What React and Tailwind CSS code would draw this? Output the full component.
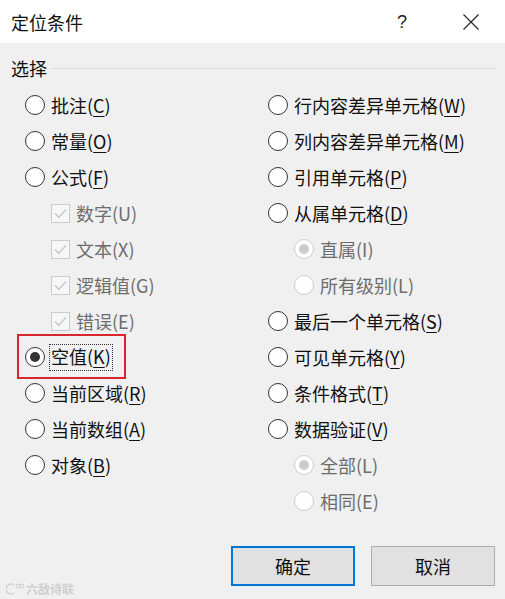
import React from "react";

const FONT = { fontFamily: '"Noto Sans CJK SC", "Noto Sans", sans-serif' };

function Radio({ checked, disabled }) {
  return (
    <span
      className={`w-[20px] h-[20px] rounded-full border flex items-center justify-center shrink-0 ${
        disabled ? "border-[#cccccc] bg-white" : "border-[#333333] bg-white"
      }`}
    >
      {checked && (
        <span
          className={`w-[10px] h-[10px] rounded-full ${disabled ? "bg-[#cccccc]" : "bg-[#333333]"}`}
        />
      )}
    </span>
  );
}

function Check() {
  return (
    <span className="w-[19px] h-[19px] border border-[#cccccc] bg-[#f7f7f7] flex items-center justify-center shrink-0">
      <svg width="13" height="11" viewBox="0 0 13 11">
        <path d="M1 5.5 L4.8 9.2 L12 1.5" fill="none" stroke="#c6c6c6" strokeWidth="1.3" />
      </svg>
    </span>
  );
}

function Label({ text, k, after = ")", disabled, underline = true }) {
  return (
    <span className={`text-[18px] leading-[22px] whitespace-nowrap ${disabled ? "text-[#6d6d6d]" : "text-[#111111]"}`}>
      {text}(
      {underline ? <span className="underline underline-offset-[3px] decoration-1">{k}</span> : k}
      {after}
    </span>
  );
}

function RadioRow({ text, k, checked, disabled, indent, highlight }) {
  return (
    <div className={`h-[36px] flex items-center ${indent ? "pl-[26px]" : ""}`}>
      <div className="relative flex items-center gap-[6px]">
        <Radio checked={checked} disabled={disabled} />
        {highlight ? (
          <span className="relative">
            <Label text={text} k={k} disabled={disabled} underline={!disabled} />
            <span className="absolute -left-[2px] -right-[2px] -top-[1px] -bottom-[2px] border border-dotted border-[#333]" />
          </span>
        ) : (
          <Label text={text} k={k} disabled={disabled} underline={!disabled} />
        )}
        {highlight && (
          <span className="absolute -left-[8px] -right-[15px] -top-[11px] -bottom-[10px] border-2 border-[#d9262c]" />
        )}
      </div>
    </div>
  );
}

function CheckRow({ text, k }) {
  return (
    <div className="h-[36px] flex items-center pl-[26px] gap-[6px]">
      <Check />
      <Label text={text} k={k} disabled underline={false} />
    </div>
  );
}

export default function App() {
  return (
    <div className="w-[505px] h-[599px] bg-[#f0f0f0] flex flex-col relative overflow-hidden" style={FONT}>
      <div className="h-[43px] bg-white flex items-center pl-[11px] pr-[26px] shrink-0">
        <span className="text-[18px] text-[#111] leading-none">定位条件</span>
        <span className="ml-auto text-[18px] text-[#222] leading-none mr-[56px]" style={{ fontFamily: '"Liberation Sans", sans-serif' }}>?</span>
        <svg width="16" height="16" viewBox="0 0 16 16">
          <path d="M0.5 0.5 L15.5 15.5 M15.5 0.5 L0.5 15.5" stroke="#222" strokeWidth="1.1" />
        </svg>
      </div>

      <div className="flex items-center pl-[11px] pr-[9px] mt-[14px] h-[22px]">
        <span className="text-[18px] leading-[22px] text-[#111]">选择</span>
        <span className="flex-1 h-px bg-[#dcdcdc] ml-[4px]" />
      </div>

      <div className="flex mt-[8px]">
        <div className="w-[243px] pl-[25px] flex flex-col">
          <RadioRow text="批注" k="C" />
          <RadioRow text="常量" k="O" />
          <RadioRow text="公式" k="F" />
          <CheckRow text="数字" k="U" />
          <CheckRow text="文本" k="X" />
          <CheckRow text="逻辑值" k="G" />
          <CheckRow text="错误" k="E" />
          <RadioRow text="空值" k="K" checked highlight />
          <RadioRow text="当前区域" k="R" />
          <RadioRow text="当前数组" k="A" />
          <RadioRow text="对象" k="B" />
        </div>
        <div className="flex-1 pl-[25px] flex flex-col">
          <RadioRow text="行内容差异单元格" k="W" />
          <RadioRow text="列内容差异单元格" k="M" />
          <RadioRow text="引用单元格" k="P" />
          <RadioRow text="从属单元格" k="D" />
          <RadioRow text="直属" k="I" checked disabled indent />
          <RadioRow text="所有级别" k="L" disabled indent />
          <RadioRow text="最后一个单元格" k="S" />
          <RadioRow text="可见单元格" k="Y" />
          <RadioRow text="条件格式" k="T" />
          <RadioRow text="数据验证" k="V" />
          <RadioRow text="全部" k="L" checked disabled indent />
          <RadioRow text="相同" k="E" disabled indent />
        </div>
      </div>

      <div className="flex justify-end gap-[16px] pr-[10px] mt-[27px]">
        <button className="w-[124px] h-[40px] border-2 border-[#0078d7] bg-[#e1e1e1] text-[18px] text-[#111] flex items-center justify-center">
          确定
        </button>
        <button className="w-[124px] h-[40px] border border-[#adadad] bg-[#e1e1e1] text-[18px] text-[#111] flex items-center justify-center">
          取消
        </button>
      </div>

      <div className="absolute left-[6px] bottom-[4px] flex items-center gap-[2px] text-[#cfcfcf]">
        <svg width="18" height="12" viewBox="0 0 18 12">
          <path d="M8 2 A5 5 0 1 0 8 10" fill="none" stroke="#cfcfcf" strokeWidth="1.5" />
          <circle cx="12" cy="3" r="2" fill="none" stroke="#cfcfcf" strokeWidth="1" />
          <circle cx="16" cy="3" r="2" fill="none" stroke="#cfcfcf" strokeWidth="1" />
        </svg>
        <span className="text-[12px] leading-none font-bold">六敌诗联</span>
      </div>
    </div>
  );
}
